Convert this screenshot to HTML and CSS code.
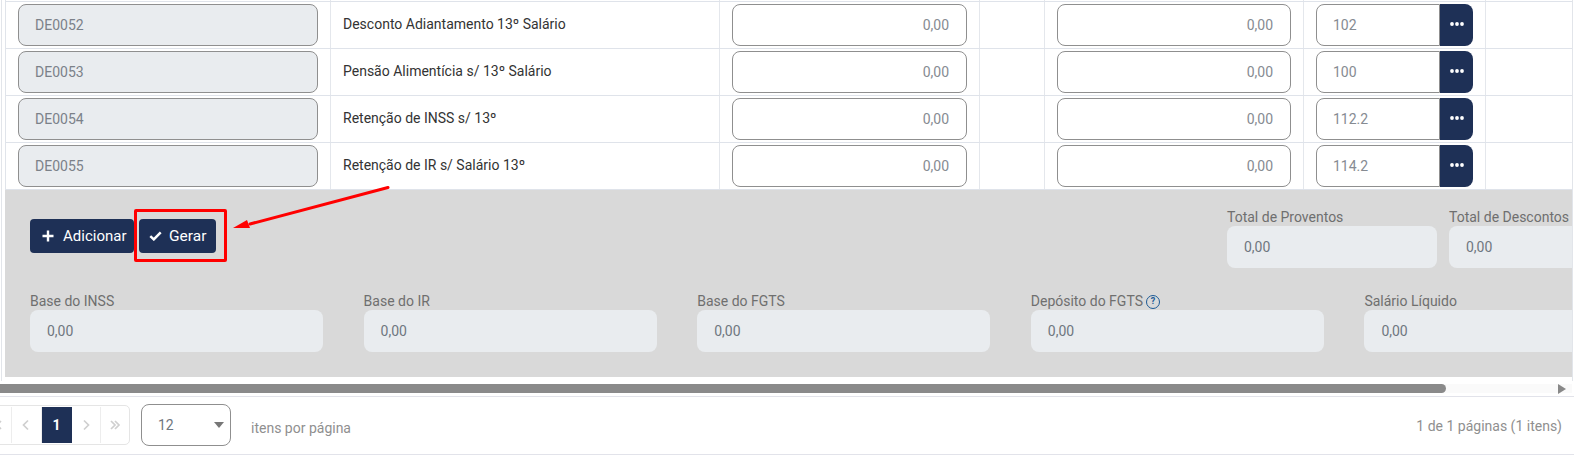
FILE: index.html
```html
<!DOCTYPE html>
<html lang="pt-BR">
<head>
<meta charset="utf-8">
<title>Gerar</title>
<link rel="stylesheet" href="styles.css">
</head>
<body>
<div class="page">
  <div class="content">
    <div class="table">
      <div class="row stub"><div class="cell"></div><div class="cell"></div><div class="cell"></div><div class="cell"></div><div class="cell"></div><div class="cell"></div><div class="cell"></div></div>

      <div class="row">
        <div class="cell"><div class="input disabled">DE0052</div></div>
        <div class="cell desc">Desconto Adiantamento 13º Salário</div>
        <div class="cell"><div class="input num">0,00</div></div>
        <div class="cell"></div>
        <div class="cell"><div class="input num">0,00</div></div>
        <div class="cell"><div class="group"><div class="input">102</div><button class="more"><svg width="14" height="4" viewBox="0 0 14 4"><circle cx="2" cy="2" r="1.9"/><circle cx="7" cy="2" r="1.9"/><circle cx="12" cy="2" r="1.9"/></svg></button></div></div>
        <div class="cell"></div>
      </div>

      <div class="row">
        <div class="cell"><div class="input disabled">DE0053</div></div>
        <div class="cell desc">Pensão Alimentícia s/ 13º Salário</div>
        <div class="cell"><div class="input num">0,00</div></div>
        <div class="cell"></div>
        <div class="cell"><div class="input num">0,00</div></div>
        <div class="cell"><div class="group"><div class="input">100</div><button class="more"><svg width="14" height="4" viewBox="0 0 14 4"><circle cx="2" cy="2" r="1.9"/><circle cx="7" cy="2" r="1.9"/><circle cx="12" cy="2" r="1.9"/></svg></button></div></div>
        <div class="cell"></div>
      </div>

      <div class="row">
        <div class="cell"><div class="input disabled">DE0054</div></div>
        <div class="cell desc">Retenção de INSS s/ 13º</div>
        <div class="cell"><div class="input num">0,00</div></div>
        <div class="cell"></div>
        <div class="cell"><div class="input num">0,00</div></div>
        <div class="cell"><div class="group"><div class="input">112.2</div><button class="more"><svg width="14" height="4" viewBox="0 0 14 4"><circle cx="2" cy="2" r="1.9"/><circle cx="7" cy="2" r="1.9"/><circle cx="12" cy="2" r="1.9"/></svg></button></div></div>
        <div class="cell"></div>
      </div>

      <div class="row">
        <div class="cell"><div class="input disabled">DE0055</div></div>
        <div class="cell desc">Retenção de IR s/ Salário 13º</div>
        <div class="cell"><div class="input num">0,00</div></div>
        <div class="cell"></div>
        <div class="cell"><div class="input num">0,00</div></div>
        <div class="cell"><div class="group"><div class="input">114.2</div><button class="more"><svg width="14" height="4" viewBox="0 0 14 4"><circle cx="2" cy="2" r="1.9"/><circle cx="7" cy="2" r="1.9"/><circle cx="12" cy="2" r="1.9"/></svg></button></div></div>
        <div class="cell"></div>
      </div>
    </div>

    <div class="panel">
      <div class="panel-top">
        <div class="actions">
          <button class="btn btn-add"><svg width="12" height="12" viewBox="0 0 12 12"><path d="M6 0.5v11M0.5 6h11" stroke="#fff" stroke-width="2.4" fill="none"/></svg>Adicionar</button>
          <button class="btn btn-gen"><svg width="13" height="10" viewBox="0 0 13 10"><path d="M1.3 5.2l3.5 3.2 6.9-7" stroke="#fff" stroke-width="2.5" fill="none"/></svg>Gerar</button>
        </div>
        <div class="totals">
          <div class="field"><label class="label">Total de Proventos</label><div class="readout">0,00</div></div>
          <div class="field"><label class="label">Total de Descontos</label><div class="readout">0,00</div></div>
        </div>
      </div>
      <div class="panel-bottom">
        <div class="field"><label class="label">Base do INSS</label><div class="readout">0,00</div></div>
        <div class="field"><label class="label">Base do IR</label><div class="readout">0,00</div></div>
        <div class="field"><label class="label">Base do FGTS</label><div class="readout">0,00</div></div>
        <div class="field"><label class="label">Depósito do FGTS <span class="help">?</span></label><div class="readout">0,00</div></div>
        <div class="field"><label class="label">Salário Líquido</label><div class="readout">0,00</div></div>
      </div>
    </div>

    <div class="scrollbar">
      <div class="thumb"></div>
      <svg class="scroll-arrow" width="8" height="10" viewBox="0 0 8 10"><path d="M0 0l8 5-8 5z" fill="#888"/></svg>
    </div>
  </div>

  <div class="footer">
    <div class="pager">
      <div class="pg"><svg width="12" height="12" viewBox="0 0 12 12"><path d="M6 2L2 6l4 4M10 2L6 6l4 4"/></svg></div>
      <div class="pg"><svg width="12" height="12" viewBox="0 0 12 12"><path d="M8 1.5L3.5 6 8 10.5"/></svg></div>
      <div class="pg active">1</div>
      <div class="pg"><svg width="12" height="12" viewBox="0 0 12 12"><path d="M4 1.5L8.5 6 4 10.5"/></svg></div>
      <div class="pg"><svg width="12" height="12" viewBox="0 0 12 12"><path d="M2 2l4 4-4 4M6 2l4 4-4 4"/></svg></div>
    </div>
    <div class="select">12<span class="caret"></span></div>
    <span class="per-page">itens por página</span>
    <span class="summary">1 de 1 páginas (1 itens)</span>
  </div>

  <div class="highlight"></div>
  <svg class="arrow" width="170" height="50" viewBox="0 0 170 50"><path d="M156 2.500L18 39" stroke="#f00" stroke-width="3" stroke-linecap="round" fill="none"/><path d="M1 43L15 35L18 43z" fill="#f00"/></svg>
</div>
</body>
</html>
```
FILE: styles.css
```css
* { box-sizing: border-box; }
html, body { margin: 0; padding: 0; background: #fff; }
body { font-family: Roboto, "Liberation Sans", sans-serif; font-size: 14px; color: #333; }

.page { position: relative; width: 1574px; height: 456px; overflow: hidden; background: #fff; }

.content {
  margin: 0 1px 0 1px;
  height: 381px;
  padding-left: 3px;
  border-left: 1px solid #e2e5ea;
  border-right: 1px solid #e2e5ea;
  position: relative;
}

.table { border-left: 1px solid #e0e4ea; }
.row {
  display: grid;
  grid-template-columns: 325px 389px 260px 65px 259px 182px 1fr;
  height: 47px;
  border-bottom: 1px solid #dfe3ea;
}
.row.stub { height: 2px; }
.cell { border-right: 1px solid #e4e7ec; padding: 2px 12px 0; }
.cell:last-child { border-right: 0; }
.stub .cell { padding: 0; }
.desc { padding-top: 12px; line-height: 20px; color: #333; font-size: 14px; white-space: nowrap; }

.input {
  height: 42px;
  display: flex;
  align-items: center;
  padding: 0 16px;
  background: #fff;
  border: 1px solid #8f8f8f;
  border-radius: 8px;
  color: #868b92;
}
.input.disabled { background: #e9ecef; color: #7b8189; }
.input.num { justify-content: flex-end; padding-right: 17px; }

.group { display: flex; height: 42px; }
.group .input { flex: 1; border-right: 1px solid #8f8f8f; border-radius: 8px 0 0 8px; }
.more {
  width: 33px;
  height: 42px;
  padding: 0;
  border: 0;
  border-radius: 0 8px 8px 0;
  background: #1e3056;
  display: flex;
  align-items: center;
  justify-content: center;
}
.more svg { display: block; margin-top: -3px; fill: #fff; }

.panel {
  height: 187px;
  padding: 19px 0 0 25px;
  background: #d9d9d9;
  overflow: hidden;
}
.panel-top { display: flex; }
.actions { flex: none; width: 1197px; display: flex; gap: 5px; padding-top: 10px; align-items: flex-start; }
.totals { flex: none; display: grid; grid-template-columns: 210px 210px; column-gap: 12px; }
.panel-bottom {
  display: grid;
  grid-template-columns: repeat(5, 293px);
  column-gap: 40.6px;
  margin-top: 25px;
}

.btn {
  height: 34px;
  display: inline-flex;
  align-items: center;
  padding: 0;
  border: 0;
  border-radius: 4px;
  background: #1e3056;
  color: #fff;
  font: 15px Roboto, "Liberation Sans", sans-serif;
}
.btn-add { width: 104px; padding-left: 12px; gap: 9px; }
.btn-gen { width: 77px; padding-left: 10px; gap: 7px; font-size: 15.5px; }
.btn svg { display: block; flex: none; }

.field { display: flex; flex-direction: column; }
.label { height: 17px; line-height: 17px; color: #6f6f6f; font-size: 14px; white-space: nowrap; display: flex; align-items: center; gap: 3px; }
.readout {
  height: 42px;
  display: flex;
  align-items: center;
  padding-left: 17px;
  border-radius: 8px;
  background: #e9ecef;
  color: #6f7780;
}
.help {
  width: 14px;
  height: 14px;
  border: 1.5px solid #1c5a96;
  border-radius: 50%;
  color: #1c5a96;
  font-size: 9px;
  font-weight: 700;
  line-height: 11px;
  text-align: center;
}

.scrollbar {
  margin-left: -5px;
  margin-top: 7px;
  height: 9px;
  width: 1572px;
  background: #fafafa;
  position: relative;
}
.thumb { width: 1446px; height: 9px; background: #8a8a8a; border-radius: 0 5px 5px 0; }
.scroll-arrow { position: absolute; right: 6px; top: 0; }

.footer {
  margin-top: 15px;
  height: 59px;
  border-top: 1px solid #e2e3ea;
  border-bottom: 1px solid #e2e3ea;
  display: flex;
  align-items: center;
  position: relative;
}
.pager {
  flex: none;
  margin-left: -18px;
  width: 148px;
  height: 40px;
  margin-top: -2px;
  padding: 1px 0;
  display: flex;
  border: 1px solid #e5e5e5;
  border-radius: 5px;
}
.pg {
  flex: 1;
  display: flex;
  align-items: center;
  justify-content: center;
  border-right: 1px solid #ededed;
  color: #fff;
  font-weight: 700;
}
.pg:last-child { border-right: 0; }
.pg svg { fill: none; stroke: #cfcfcf; stroke-width: 1.7; display: block; }
.pg.active { background: #1e3056; border-right: 0; flex: none; width: 30px; }

.select {
  flex: none;
  margin-left: 11px;
  margin-top: -1px;
  width: 90px;
  height: 42px;
  padding-left: 16px;
  display: flex;
  align-items: center;
  position: relative;
  border: 1px solid #8f8f8f;
  border-radius: 8px;
  color: #6f7780;
}
.caret {
  position: absolute;
  right: 6px;
  top: 17px;
  border-left: 5.5px solid transparent;
  border-right: 5.5px solid transparent;
  border-top: 6px solid #777;
}
.per-page { margin-left: 20px; margin-top: 4px; color: #8f8f8f; }
.summary { margin-left: auto; margin-right: 12px; margin-top: 0; color: #8f8f8f; }

.highlight {
  position: absolute;
  left: 134px;
  top: 209px;
  width: 93px;
  height: 53px;
  border: 3px solid #f00;
  border-radius: 2px;
}
.arrow { position: absolute; left: 232px; top: 185px; }
```
